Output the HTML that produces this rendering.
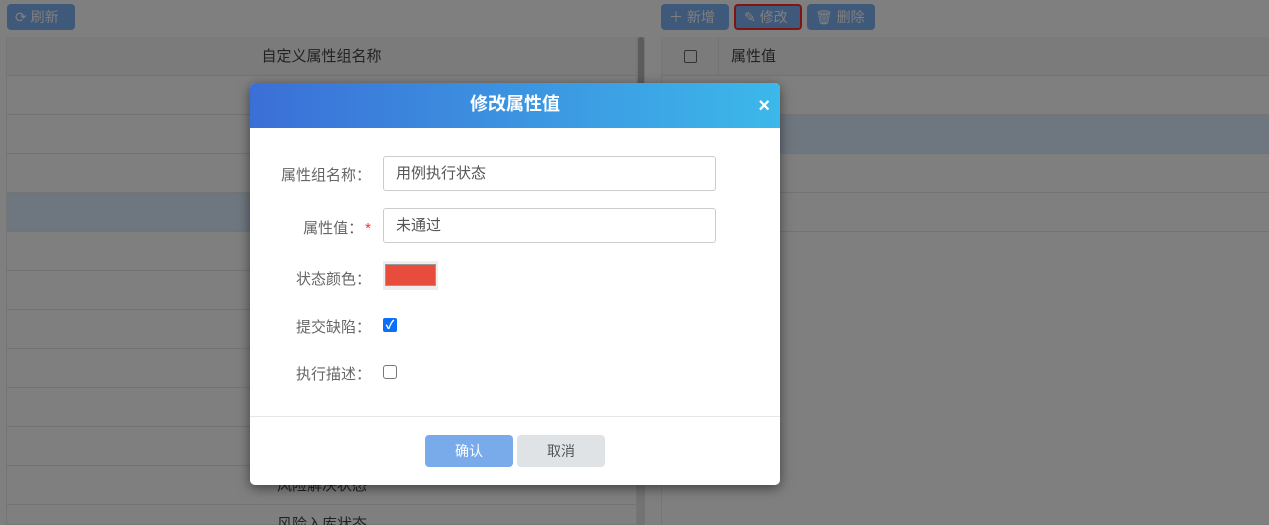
<!DOCTYPE html>
<html><head><meta charset="utf-8"><style>
*{box-sizing:border-box;margin:0;padding:0}
html,body{width:1269px;height:525px;overflow:hidden;background:#808080}
body{font-family:"Liberation Sans","Noto Sans CJK SC",sans-serif;position:relative;font-size:14px;color:#222}
#wrap{position:absolute;left:0;top:0;width:1269px;height:525px;overflow:hidden;background:#fff}
.abs{position:absolute}
.btn{position:absolute;top:4px;height:26px;border-radius:4px;background:#7fb2f5;color:#fff;font-size:14px;line-height:26px;padding-left:8px}
.row{position:absolute;height:39px;border-bottom:1px solid #e6e6e6}
.lbl{position:absolute;color:#666;font-size:15px;text-align:right;width:125px;left:246px}
.inp{position:absolute;left:383px;width:333px;height:35px;border:1px solid #ccc;border-radius:3px;color:#555;font-size:15px;padding-left:12px;line-height:33px;background:#fff}
#ov{position:absolute;left:0;top:0;width:1269px;height:525px;background:rgba(0,0,0,0.5)}
</style></head><body><div id="wrap">
<div class="btn" style="left:7px;width:68px">⟳ 刷新</div>
<div class="btn" style="left:661px;width:68px">＋ 新增</div>
<div class="btn" style="left:734px;width:68px;border:2px solid #ff2a20;line-height:22px">✎ 修改</div>
<div class="btn" style="left:807px;width:68px">🗑 删除</div>
<div class="abs" style="left:6px;top:37px;width:631px;height:488px;border:1px solid #ececec"></div>
<div class="row" style="left:7px;top:37px;width:629px;background:#f6f6f6;text-align:center;line-height:39px;font-size:15px;color:#444">自定义属性组名称</div>
<div class="row" style="left:7px;top:76px;width:629px"></div>
<div class="row" style="left:7px;top:115px;width:629px"></div>
<div class="row" style="left:7px;top:154px;width:629px"></div>
<div class="row" style="left:7px;top:193px;width:629px;background:#dcecff"></div>
<div class="row" style="left:7px;top:232px;width:629px"></div>
<div class="row" style="left:7px;top:271px;width:629px"></div>
<div class="row" style="left:7px;top:310px;width:629px"></div>
<div class="row" style="left:7px;top:349px;width:629px"></div>
<div class="row" style="left:7px;top:388px;width:629px"></div>
<div class="row" style="left:7px;top:427px;width:629px"></div>
<div class="row" style="left:7px;top:466px;width:629px;padding-left:270px;line-height:39px;font-size:15px;color:#444">风险解决状态</div>
<div class="row" style="left:7px;top:505px;width:629px;padding-left:270px;line-height:39px;font-size:15px;color:#444">风险入库状态</div>
<div class="abs" style="left:637px;top:37px;width:8px;height:488px;background:#e6e6e6"></div>
<div class="abs" style="left:638px;top:37px;width:6px;height:260px;background:#b8b8b8;border-radius:3px"></div>
<div class="abs" style="left:661px;top:37px;width:608px;height:488px;border-left:1px solid #ececec"></div>
<div class="row" style="left:662px;top:37px;width:607px;background:#f6f6f6"></div>
<div class="abs" style="left:718px;top:37px;width:1px;height:39px;background:#e6e6e6"></div>
<div class="abs" style="left:684px;top:50px;width:13px;height:13px;border:1px solid #666;border-radius:2px"></div>
<div class="abs" style="left:731px;top:37px;line-height:39px;font-size:15px;color:#444">属性值</div>
<div class="row" style="left:662px;top:76px;width:607px"></div>
<div class="row" style="left:662px;top:115px;width:607px;background:#dcecff"></div>
<div class="row" style="left:662px;top:154px;width:607px"></div>
<div class="row" style="left:662px;top:193px;width:607px"></div>
<div id="ov"></div>
<div class="abs" style="left:250px;top:83px;width:530px;height:402px;background:#fff;border-radius:5px;box-shadow:0 3px 12px rgba(0,0,0,.5);overflow:hidden">
 <div style="height:45px;background:linear-gradient(90deg,#3b6fd7,#3cb8ea);color:#fff;text-align:center;line-height:43px;font-size:18px;font-weight:bold">修改属性值</div>
 <div class="abs" style="right:10px;top:12px;color:#fff;font-size:20px;font-weight:bold">×</div>
 <div class="abs" style="left:0;top:333px;width:530px;height:1px;background:#e6e6e6"></div>
</div>
<div class="lbl" style="top:164px">属性组名称：</div>
<div class="inp" style="top:156px">用例执行状态</div>
<div class="lbl" style="top:217px">属性值：<span style="color:#e33;margin-left:2px">*</span></div>
<div class="inp" style="top:208px">未通过</div>
<div class="lbl" style="top:268px">状态颜色：</div>
<div class="abs" style="left:383px;top:261px;width:55px;height:29px;background:#eee"></div>
<div class="abs" style="left:385px;top:264px;width:51px;height:22px;background:#e74c3c;border:1px solid #999"></div>
<div class="lbl" style="top:316px">提交缺陷：</div>
<div class="abs" style="left:383px;top:318px;width:14px;height:14px;background:#0d6efd;border-radius:2px;color:#fff;font-size:12px;line-height:14px;text-align:center;font-weight:bold">✓</div>
<div class="lbl" style="top:363px">执行描述：</div>
<div class="abs" style="left:383px;top:365px;width:14px;height:14px;border:1px solid #777;border-radius:3px"></div>
<div class="abs" style="left:425px;top:435px;width:88px;height:32px;background:#79abea;border-radius:4px;color:#fff;text-align:center;line-height:32px;font-size:14px">确认</div>
<div class="abs" style="left:517px;top:435px;width:88px;height:32px;background:#e0e3e5;border-radius:4px;color:#555;text-align:center;line-height:32px;font-size:14px">取消</div>
</div></body></html>
